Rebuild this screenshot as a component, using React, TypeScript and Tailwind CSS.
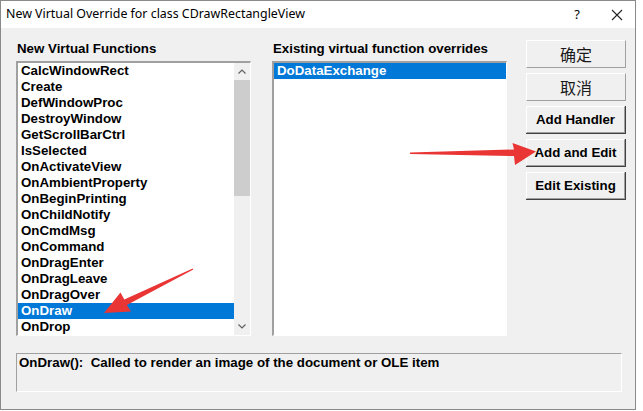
import React from "react";

const functions = [
  "CalcWindowRect",
  "Create",
  "DefWindowProc",
  "DestroyWindow",
  "GetScrollBarCtrl",
  "IsSelected",
  "OnActivateView",
  "OnAmbientProperty",
  "OnBeginPrinting",
  "OnChildNotify",
  "OnCmdMsg",
  "OnCommand",
  "OnDragEnter",
  "OnDragLeave",
  "OnDragOver",
  "OnDraw",
  "OnDrop",
];

const ui = { fontFamily: '"Liberation Sans", Arial, sans-serif' };

function Chevron({ down }: { down?: boolean }) {
  return (
    <svg width="8" height="5" viewBox="0 0 8 5" className="block">
      <path
        d={down ? "M0.5 0.5 L4 4 L7.5 0.5" : "M0.5 4.5 L4 1 L7.5 4.5"}
        fill="none"
        stroke="#606060"
        strokeWidth="1.2"
      />
    </svg>
  );
}

/** Caja hundida al estilo Win32: borde oscuro arriba-izquierda, claro abajo-derecha. */
function ListBox({ children, scroll }: { children: React.ReactNode; scroll?: boolean }) {
  return (
    <div className="flex h-[275px] w-[235px] border-t-2 border-l-2 border-r border-b border-t-[#a0a0a0] border-l-[#a0a0a0] border-r-white border-b-white bg-white">
      <div className="flex flex-1 flex-col">{children}</div>
      {scroll && (
        <div className="flex w-[16px] flex-col bg-[#f0f0f0]">
          <div className="flex h-[17px] items-center justify-center">
            <Chevron />
          </div>
          <div className="h-[116px] bg-[#cdcdcd]" />
          <div className="flex-1" />
          <div className="flex h-[17px] items-center justify-center">
            <Chevron down />
          </div>
        </div>
      )}
    </div>
  );
}

function Row({ label, selected }: { label: string; selected?: boolean }) {
  return (
    <div
      className={`h-[16px] pl-[3px] text-[13.3px] font-bold leading-[16px] ${
        selected ? "bg-[#0078d7] text-white" : "text-black"
      }`}
    >
      {label}
    </div>
  );
}

function ModernButton({ label }: { label: string }) {
  return (
    <div
      className="flex h-[28px] w-[100px] items-center justify-center border border-t-white border-l-white border-r-[#a0a0a0] border-b-[#a0a0a0] bg-[#f0f0f0] text-[16px] text-[#1a1a1a]"
      style={{ fontFamily: '"Noto Sans CJK SC", sans-serif' }}
    >
      {label}
    </div>
  );
}

function ClassicButton({ label }: { label: string }) {
  return (
    <div className="h-[28px] w-[100px] border-r border-b border-r-[#404040] border-b-[#404040] bg-[#f0f0f0]">
      <div className="flex h-full items-center justify-center border-t border-l border-r border-b border-t-white border-l-white border-r-[#a0a0a0] border-b-[#a0a0a0] text-[13.3px] font-bold text-black">
        {label}
      </div>
    </div>
  );
}

export default function App() {
  return (
    <div className="relative h-[411px] w-[643px] overflow-hidden bg-white" style={ui}>
      <div className="flex h-[410px] w-[636px] flex-col border border-[#8a8a8a] bg-[#f0f0f0]">
        <div
          className="flex h-[27px] items-center bg-white pl-[5px] text-[12.4px] text-black"
          style={{ fontFamily: '"Noto Sans", sans-serif' }}
        >
          <span className="flex-1">New Virtual Override for class CDrawRectangleView</span>
          <span className="w-[12px] text-center text-[13px]">?</span>
          <span className="ml-[27px] mr-[11px] flex w-[14px] justify-center">
            <svg width="12" height="12" viewBox="0 0 12 12">
              <path d="M1 1 L11 11 M11 1 L1 11" stroke="#222" strokeWidth="1.1" />
            </svg>
          </span>
        </div>

        <div className="flex px-[15px] pt-[12px]">
          <div className="flex flex-col">
            <div className="h-[17px] pl-[1px] text-[13.3px] font-bold leading-[17px]">New Virtual Functions</div>
            <div className="mt-[4px]">
              <ListBox scroll>
                {functions.map((f) => (
                  <Row key={f} label={f} selected={f === "OnDraw"} />
                ))}
              </ListBox>
            </div>
          </div>

          <div className="ml-[21px] flex flex-col">
            <div className="h-[17px] pl-[1px] text-[13.3px] font-bold leading-[17px]">
              Existing virtual function overrides
            </div>
            <div className="mt-[4px]">
              <ListBox>
                <Row label="DoDataExchange" selected />
              </ListBox>
            </div>
          </div>

          <div className="ml-[19px] flex flex-col gap-[5px]">
            <ModernButton label="确定" />
            <ModernButton label="取消" />
            <ClassicButton label="Add Handler" />
            <ClassicButton label="Add and Edit" />
            <ClassicButton label="Edit Existing" />
          </div>
        </div>

        <div className="mx-[15px] mt-[17px] h-[39px] w-[606px] border-t border-l border-r border-b border-t-[#a0a0a0] border-l-[#a0a0a0] border-r-white border-b-white pl-[2px] pt-[1px] text-[13.3px] font-bold leading-[16px] whitespace-pre">
          {"OnDraw():  Called to render an image of the document or OLE item"}
        </div>
      </div>

      <svg className="pointer-events-none absolute left-0 top-0" width="643" height="411">
        <polygon
          points="192.7,268.4 124.3,299.6 120.5,292.5 104,313 131,311.5 126.9,305 193.3,269.6"
          fill="#ea3535"
        />
        <polygon
          points="410,152.6 514,149.5 512.5,143 536,151.5 515,165 514,156 410,154"
          fill="#ea3535"
        />
      </svg>
    </div>
  );
}
